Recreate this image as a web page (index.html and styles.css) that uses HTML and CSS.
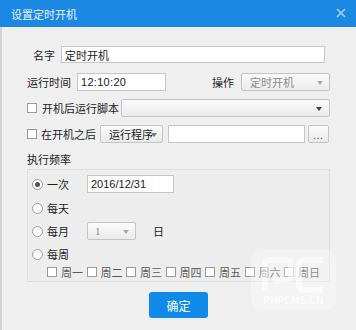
FILE: index.html
```html
<!DOCTYPE html>
<html lang="zh-CN">
<head>
    <meta charset="UTF-8">
    <title>设置定时开机</title>
    <link rel="stylesheet" href="styles.css">
</head>
<body>
    <div class="dialog">
        <div class="titlebar">
            <span class="title">设置定时开机</span>
            <svg class="close" width="10" height="10" viewBox="0 0 10 10">
                <path d="M1 1 L9 9 M9 1 L1 9" stroke="#9fd4f6" stroke-width="1.6" fill="none"/>
            </svg>
        </div>
        <div class="content">
            <div class="row row-name">
                <span class="label name-label">名字</span>
                <input class="field name-field" type="text" value="定时开机">
            </div>
            <div class="row row-time">
                <span class="label time-label">运行时间</span>
                <input class="field time-field" type="text" value="12:10:20">
                <span class="label op-label">操作</span>
                <div class="select op-select disabled">定时开机<span class="arrow"></span></div>
            </div>
            <div class="row row-script">
                <span class="check"></span>
                <span class="label script-label">开机后运行脚本</span>
                <div class="select script-select"><span class="arrow dark"></span></div>
            </div>
            <div class="row row-after">
                <span class="check"></span>
                <span class="label after-label">在开机之后</span>
                <div class="btn run-btn">运行程序<span class="arrow"></span></div>
                <input class="field path-field" type="text" value="">
                <div class="btn dots-btn">...</div>
            </div>
            <div class="section-title">执行频率</div>
            <div class="group">
                <div class="freq-row first">
                    <span class="radio checked"></span>
                    <span class="freq-label">一次</span>
                    <input class="field date-field" type="text" value="2016/12/31">
                </div>
                <div class="freq-row">
                    <span class="radio"></span>
                    <span class="freq-label">每天</span>
                </div>
                <div class="freq-row">
                    <span class="radio"></span>
                    <span class="freq-label">每月</span>
                    <div class="select day-select disabled">1<span class="arrow"></span></div>
                    <span class="day-unit">日</span>
                </div>
                <div class="freq-row">
                    <span class="radio"></span>
                    <span class="freq-label">每周</span>
                </div>
                <div class="week-row">
                    <span class="week-item"><span class="check"></span>周一</span>
                    <span class="week-item"><span class="check"></span>周二</span>
                    <span class="week-item"><span class="check"></span>周三</span>
                    <span class="week-item"><span class="check"></span>周四</span>
                    <span class="week-item"><span class="check"></span>周五</span>
                    <span class="week-item"><span class="check"></span>周六</span>
                    <span class="week-item"><span class="check"></span>周日</span>
                </div>
            </div>
            <div class="footer">
                <button class="ok-btn" type="button">确定</button>
            </div>
        </div>
        <!-- faint site watermark over the bottom right corner -->
        <div class="watermark">
            <svg class="wm-logo" width="70" height="38" viewBox="0 0 70 38">
                <path d="M6 34 V8 Q6 4 10 4 H28 Q32 4 32 8 V20 Q32 24 28 24 H14" stroke="rgba(255,255,255,0.5)" stroke-width="6" fill="none"/>
                <path d="M64 4 H46 Q40 4 40 10 V28 Q40 34 46 34 H64" stroke="rgba(255,255,255,0.5)" stroke-width="6" fill="none"/>
            </svg>
            <span class="wm-text">PHPCMS.CN</span>
        </div>
    </div>
</body>
</html>
```

FILE: styles.css
```css
body {
    margin: 0;
    font-family: "Noto Sans CJK SC", "Liberation Sans", sans-serif;
    font-size: 11px;
    color: #1c1c1c;
    background: #efefef;
}
.dialog {
    position: relative;
    width: 356px;
    height: 330px;
    background: #efefef;
    overflow: hidden;
}
.titlebar {
    height: 27px;
    background: #1b89e4;
    display: flex;
    align-items: center;
    justify-content: space-between;
    padding: 0 10px 0 11px;
    color: #e6f1fb;
}
.title {
    font-size: 11px;
    line-height: 14px;
}
.close {
    margin-top: -1px;
}
.content {
    height: 303px;
    box-sizing: border-box;
    border-left: 2px solid #d3d3d3;
    padding: 19px 0 0 25px;
}
.row {
    display: flex;
    align-items: center;
    height: 18px;
}
.row-name {
    height: 17px;
}
.row-time {
    margin-top: 10px;
}
.row-script,
.row-after {
    margin-top: 8px;
}
.label {
    line-height: 14px;
    white-space: nowrap;
}
.field {
    box-sizing: border-box;
    height: 100%;
    border: 1px solid #c6c6c6;
    background: #fff;
    font-family: "Noto Sans CJK SC", "Liberation Sans", sans-serif;
    font-size: 11px;
    color: #1c1c1c;
    padding: 0 3px;
    margin: 0;
    outline: none;
}
.name-label {
    margin-left: 6px;
    width: 22px;
}
.name-field {
    margin-left: 6px;
    width: 264px;
}
.time-label {
    width: 44px;
}
.time-field {
    margin-left: 6px;
    width: 89px;
    font-family: "Liberation Sans", sans-serif;
    letter-spacing: 0.3px;
}
.op-label {
    margin-left: 46px;
    width: 22px;
}
.select {
    box-sizing: border-box;
    height: 100%;
    position: relative;
    display: flex;
    align-items: center;
    padding: 0 4px;
    border: 1px solid #c4c4c4;
    border-radius: 2px;
    background: linear-gradient(#fbfbfb, #ebebeb);
    white-space: nowrap;
}
.select.disabled {
    color: #8a8a8a;
}
.arrow {
    position: absolute;
    right: 6px;
    top: 7px;
    width: 0;
    height: 0;
    border-left: 3px solid transparent;
    border-right: 3px solid transparent;
    border-top: 4px solid #a9a9a9;
}
.arrow.dark {
    border-top-color: #444;
    right: 7px;
}
.op-select {
    margin-left: 7px;
    width: 89px;
    padding-left: 8px;
}
.check {
    box-sizing: border-box;
    display: inline-block;
    width: 10px;
    height: 10px;
    border: 1px solid #9a9a9a;
    background: #fff;
    flex: none;
}
.script-label {
    margin-left: 5px;
    width: 79px;
}
.script-select {
    width: 209px;
}
.after-label {
    margin-left: 4px;
    width: 59px;
}
.btn {
    box-sizing: border-box;
    height: 100%;
    position: relative;
    display: flex;
    align-items: center;
    border: 1px solid #c4c4c4;
    border-radius: 2px;
    background: linear-gradient(#fbfbfb, #e9e9e9);
    white-space: nowrap;
}
.run-btn {
    width: 63px;
    padding-left: 8px;
}
.run-btn .arrow {
    right: 5px;
    border-top-color: #777;
}
.path-field {
    margin-left: 5px;
    width: 137px;
}
.dots-btn {
    margin-left: 3px;
    width: 21px;
    justify-content: center;
    color: #555;
    font-size: 9px;
    letter-spacing: 1px;
    padding-top: 2px;
}
.section-title {
    margin-top: 9px;
    line-height: 14px;
}
.group {
    box-sizing: border-box;
    margin-top: 3px;
    width: 303px;
    height: 113px;
    border: 1px solid #dedede;
    background: #ededed;
    padding: 5px 0 0 4px;
}
.freq-row {
    display: flex;
    align-items: center;
    height: 18px;
    margin-top: 5px;
}
.freq-row.first {
    margin-top: 0;
}
.freq-row + .freq-row:nth-child(2) {
    margin-top: 6px;
}
.radio {
    box-sizing: border-box;
    width: 11px;
    height: 11px;
    border: 1px solid #9a9a9a;
    border-radius: 50%;
    background: #fff;
    position: relative;
    flex: none;
}
.radio.checked::after {
    content: "";
    position: absolute;
    left: 2px;
    top: 2px;
    width: 5px;
    height: 5px;
    border-radius: 50%;
    background: #555;
}
.freq-label {
    margin-left: 4px;
    width: 40px;
    line-height: 14px;
}
.date-field {
    width: 87px;
    font-family: "Liberation Sans", sans-serif;
}
.day-select {
    width: 49px;
    padding-left: 7px;
    font-family: "Liberation Serif", serif;
}
.day-unit {
    margin-left: 17px;
}
.week-row {
    display: flex;
    align-items: center;
    gap: 3.5px;
    margin: 2px 0 0 15px;
    height: 14px;
    color: #5a5a5a;
}
.week-item {
    display: flex;
    align-items: center;
    gap: 4px;
    width: 36px;
    white-space: nowrap;
}
.footer {
    width: 303px;
    display: flex;
    justify-content: center;
    margin-top: 10px;
}
.ok-btn {
    width: 59px;
    height: 26px;
    border: none;
    border-radius: 3px;
    background: #0f8ae8;
    color: #fff;
    font-family: "Noto Sans CJK SC", sans-serif;
    font-size: 12px;
    padding: 0;
}
.watermark {
    position: absolute;
    left: 251px;
    top: 250px;
    width: 85px;
    height: 60px;
    border-radius: 10px;
    background: rgba(255, 255, 255, 0.3);
    display: flex;
    flex-direction: column;
    align-items: center;
    justify-content: space-between;
    padding-top: 6px;
    box-sizing: border-box;
}
.wm-text {
    font-family: "Liberation Sans", sans-serif;
    font-size: 10px;
    font-weight: bold;
    line-height: 12px;
    color: rgba(255, 255, 255, 0.7);
    margin-bottom: 3px;
}
```
